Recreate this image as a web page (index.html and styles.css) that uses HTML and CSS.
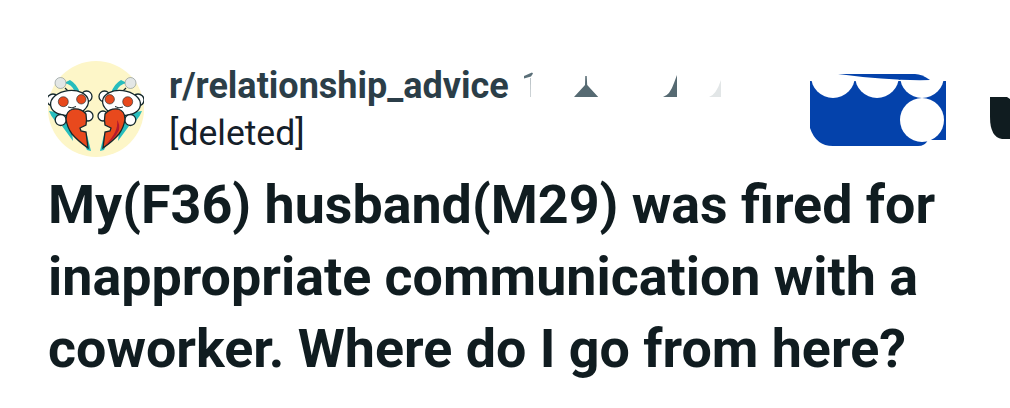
FILE: index.html
```html
<!DOCTYPE html>
<html lang="en">
<head>
<meta charset="utf-8">
<title>Post</title>
<link rel="stylesheet" href="styles.css">
</head>
<body>
<main class="post">
  <header class="head">
    <svg class="avatar" viewBox="0 0 96 96" aria-hidden="true">
      <defs>
        <g id="snoo">
          <path d="M16 22q8 1 11 9l5 1q-3-9-10-13z" fill="#27bdbd"/>
          <circle cx="12.500" cy="22" r="5.500" fill="#e3e7e6" stroke="#7d8a8a" stroke-width=".6"/>
          <path d="M1 50q4 10 13 15l11 15-2-18-8-10z" fill="#27bdbd"/>
          <path d="M39 74l4 16-4-1-5-11z" fill="#27bdbd"/>
          <path d="M17 27l6 6" stroke="#15282c" stroke-width="1.200"/>
          <circle cx="5" cy="39" r="6" fill="#fff" stroke="#15282c" stroke-width="1.300"/>
          <circle cx="38.500" cy="35.500" r="5.500" fill="#fff" stroke="#15282c" stroke-width="1.300"/>
          <ellipse cx="21.500" cy="42" rx="19" ry="12.500" fill="#fff" stroke="#15282c" stroke-width="1.300" transform="rotate(-7 21.500 42)"/>
          <circle cx="15.300" cy="40.700" r="5" fill="#e8491d" stroke="#15282c" stroke-width=".6"/>
          <circle cx="33.300" cy="38.300" r="4.700" fill="#e8491d" stroke="#15282c" stroke-width=".6"/>
          <path d="M20 46q4 2 8-.5" fill="none" stroke="#15282c" stroke-width="1"/>
          <circle cx="12.700" cy="59" r="5.500" fill="#fff" stroke="#15282c" stroke-width="1.300"/>
          <circle cx="40" cy="55" r="5" fill="#fff" stroke="#15282c" stroke-width="1.300"/>
          <path d="M18 58q0-8 7-10 8-1 13 5 1 6 0 11l-6 3 1 3 5 1 2 16q-10-7-16-14-5-7-6-15z" fill="#e8491d" stroke="#15282c" stroke-width="1.300"/>
        </g>
      </defs>
      <circle cx="48" cy="48" r="48" fill="#fdf6c8"/>
      <use href="#snoo"/>
      <use href="#snoo" transform="translate(95 0) scale(-1 1)"/>
      <path d="M69 59q2 12-12 25 9-5 14-15 1-6-2-10z" fill="#b3182e"/>
    </svg>
    <div class="meta">
      <div class="sub-row">
        <span class="sub">r/relationship_advice</span>
        <svg class="glitches" viewBox="0 0 200 25" aria-hidden="true">
          <path d="M3 4l8-3.500 1 1-2 3-7 2z" fill="#5a6f78"/>
          <path d="M9 6h.6l-.1 19h-.4z" fill="#8b999f"/>
          <path d="M64.300 4h1.400l.5 9 11 12H53l11-12z" fill="#566a72"/>
          <path d="M142 25q7-2 11-14l3-8v22z" fill="#566a72"/>
          <path d="M188 25q7-2 12-17v17z" fill="#e2e6e7"/>
        </svg>
      </div>
      <div class="author">[deleted]</div>
    </div>
    <svg class="badge" viewBox="0 0 136 72" aria-hidden="true">
      <path d="M0 6v48q6 18 23 18h85q7 0 10-6h18V6h-16Q112 0 105 0H28z" fill="#0442ab"/>
      <path d="M0 0h28Q80 7 120 6h16v1H0z" fill="#fff"/>
      <circle cx="23" cy="2" r="22" fill="#fff"/>
      <circle cx="67" cy="2" r="22" fill="#fff"/>
      <circle cx="112" cy="2" r="22" fill="#fff"/>
      <circle cx="112" cy="46" r="22" fill="#fff"/>
      <path d="M28 0H105Q112 0 120 6 80 7 28 0z" fill="#0442ab"/>
    </svg>
    <svg class="edge" viewBox="0 0 20 44" aria-hidden="true">
      <path d="M0 0h17l3 2v40h-8Q0 40 0 20z" fill="#101c20"/>
    </svg>
  </header>
  <h1 class="title">My(F36) husband(M29) was fired for inappropriate communication with a coworker. Where do I go from here?</h1>
</main>
</body>
</html>
```
FILE: styles.css
```css
html, body { margin: 0; padding: 0; background: #fff; }
body { width: 1010px; height: 408px; overflow: hidden; font-family: Roboto, sans-serif; }
.post { padding: 61px 0 0 48px; }
.head { display: flex; align-items: flex-start; height: 108px; }
.avatar { width: 96px; height: 96px; flex: none; }
.meta { width: 570px; margin-left: 25px; flex: none; }
.sub-row { display: flex; align-items: flex-start; height: 50px; }
.sub { font-size: 36px; font-weight: 700; color: #2b3e48; line-height: 50px; white-space: nowrap; }
.glitches { width: 200px; height: 25px; margin: 11px 0 0 12px; flex: none; }
.author { font-size: 35.500px; color: #15202a; line-height: 44px; }
.badge { width: 136px; height: 72px; margin: 13px 0 0 71px; flex: none; }
.edge { width: 20px; height: 44px; margin: 36px 0 0 44px; flex: none; }
.title { margin: 0; width: 950px; font-size: 53.800px; font-weight: 700; line-height: 72px; color: #101c20; }
```
